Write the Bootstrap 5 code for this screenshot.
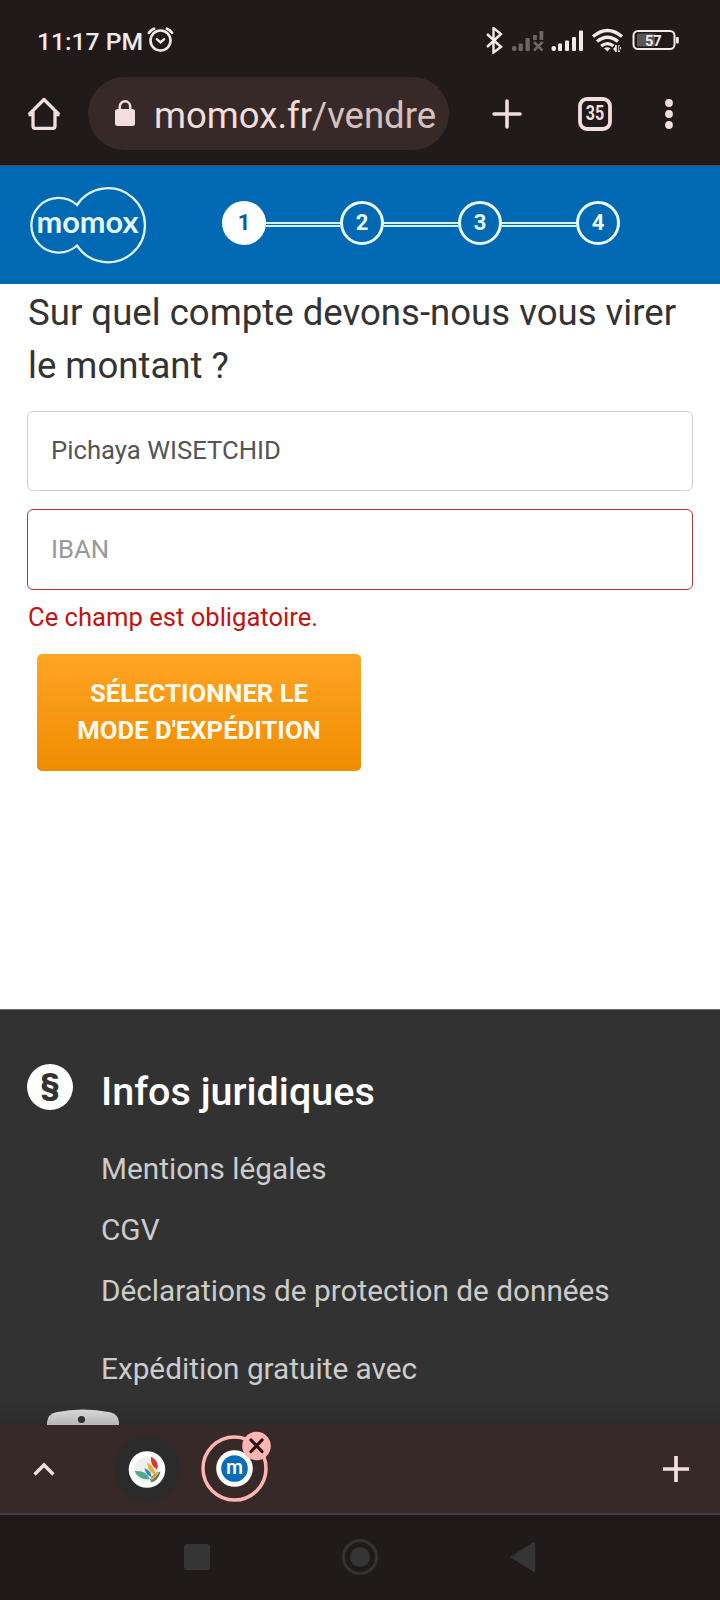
<!DOCTYPE html>
<html lang="fr">
<head>
<meta charset="utf-8">
<meta name="viewport" content="width=device-width, initial-scale=1">
<title>momox.fr – vendre</title>
<link rel="stylesheet" href="https://cdn.jsdelivr.net/npm/bootstrap@5.3.0/dist/css/bootstrap.min.css">
<style>
body{font-family:Roboto,sans-serif;width:720px;height:1600px;overflow:hidden;background:#fff;color:#333}
svg{display:block;flex:none}
.sys-bar{height:77px;padding:6px 41px 0 37px;background:#201a1a;color:#f1ebeb;font-size:24.7px;font-weight:500}
.browser-bar{height:89px;padding:0 0 15px;background:#201a1a;border-bottom:1px solid #4b4c50}
.address{width:361px;height:73px;margin-left:27px;padding:4px 0 0 26px;border-radius:37px;background:#382929;color:#f1dedd;font-size:36.5px;line-height:1;white-space:nowrap}
.address .url{padding-top:2px}
.address .path{color:#d8c2c0}
.site-head{height:118px;background:#0168b3}
.steps{margin-left:75px}
.step-dot{width:44px;height:44px;border:3.5px solid #e9fbff;border-radius:50%;color:#eafaff;font-size:22px;font-weight:700;line-height:1}
.step-dot.active{background:#fff;border-color:#fff;color:#0c5c9c}
.step-line{width:74px;height:5px;margin-top:3px;border:solid #d5f0fb;border-width:2px 0}
.account{height:725px;padding:2px 27px 0}
.account h1{font-size:36.6px;line-height:53px;font-weight:400;color:#333;margin:0 0 19px;padding-left:1px;white-space:nowrap}
.account .form-control{height:80px;border:1.5px solid #cfcfd2;border-radius:6px;padding:0 23px 2px;font-size:25.7px;color:#555;background:#fff}
.account .form-control::placeholder{color:#999;opacity:1}
.account .form-control.is-invalid{height:81px;margin-top:18px;border-color:#b73434;background-image:none;padding:0 23px 2px}
.account .invalid-feedback{font-size:25.6px;line-height:36px;color:#c4120f;margin:9px 0 19px;padding-left:1px}
.btn-order{width:324px;height:117px;margin-left:10px;padding:0 0 2px;border:0;border-radius:5px;background:linear-gradient(#ffa424,#ee8d00);color:#fffaf0;font-size:25.7px;line-height:36.6px;font-weight:700}
.site-foot{height:416px;padding:54px 27px 0;background:linear-gradient(#323232 0 390px,#2c2c2c);border-top:1px solid #6b6b6b;color:#ccc}
.para{width:46px;height:46px;background:#fff;color:#333;font-size:31px;font-weight:900;line-height:1;padding-bottom:5px}
.site-foot h2{font-size:39.5px;line-height:48px;font-weight:500;color:#fff;margin:4px 0 22px}
.site-foot a,.site-foot p{display:block;font-size:29.75px;line-height:61px;color:#ccc;text-decoration:none;margin:0;white-space:nowrap}
.site-foot p{margin-top:17px}
.tab-strip{height:90px;background:#382929;border-bottom:2px solid #4c3c3d;padding-left:32px;padding-right:27px}
.sys-nav{height:85px;background:#201a1a;padding:0 184px 2px}
</style>
</head>
<body class="d-flex flex-column">

<div class="sys-bar d-flex align-items-center flex-shrink-0">
  <span class="text-nowrap">11:17 PM</span>
  <svg class="ms-1" width="27" height="26" viewBox="0 0 27 26" fill="none" stroke="#f1ebeb" stroke-linecap="round" style="margin-top:-4px"><circle cx="13.500" cy="13.500" r="10" stroke-width="2.600"/><path d="M9.800 12.200l3.700 3.300 3.700-3.300" stroke-width="2.400"/><path d="M2 5.800Q4 3 7 1.800M20 1.800Q23 3 25 5.800" stroke-width="2.800"/></svg>
  <svg class="ms-auto" width="194" height="27" viewBox="485 27 194 27" fill="#f1ebeb" style="margin-top:-3px">
    <path d="M487 34l14 13-7.500 5.500V28l7.500 6-14 13" fill="none" stroke="#f1ebeb" stroke-width="2.400"/>
    <g fill="#6b6565"><rect x="512" y="46" width="4.500" height="5" rx="2"/><rect x="518.500" y="43.500" width="4.300" height="7.500" rx="1"/><rect x="525.500" y="38" width="4.300" height="13" rx="1"/><rect x="533" y="35" width="3.800" height="5"/><rect x="539.500" y="31" width="3.800" height="9"/><path d="M534 42l8.500 8.500m0-8.500l-8.500 8.500" stroke="#6b6565" stroke-width="2.600"/></g>
    <rect x="551.500" y="46" width="4.500" height="5" rx="2"/><rect x="558" y="43.500" width="4" height="7.500" rx="1"/><rect x="565" y="40.500" width="4" height="10.500" rx="1"/><rect x="572" y="37" width="4" height="14" rx="1"/><rect x="566" y="40.500" width="0" height="0"/><rect x="579" y="30.500" width="4" height="20.500" rx="1"/>
    <g fill="none" stroke="#f1ebeb" stroke-width="3.200"><path d="M593 36.500Q607.500 24.500 622 36.500"/><path d="M597 41.500Q607.500 33 618 41.500"/><path d="M601.200 46Q607.500 41.300 613.500 46"/></g>
    <path d="M604 48.300q3.300-2.300 6.600 0L607.300 51.500zM613 49l2.800-3v6zM621.500 48l-2.800-3v6zM615 45h1.800v7H615zM618 45h1.800v7H618z"/>
    <rect x="633.500" y="31" width="41" height="18" rx="4.500" fill="none" stroke="#f1ebeb" stroke-width="2"/>
    <rect x="637" y="33.500" width="18" height="13" rx="1.500" fill="#5b5656"/><rect x="676" y="37" width="2.800" height="6.500" rx="1"/>
    <text x="645" y="45.500" font-size="14.600" font-weight="700" font-family="Roboto, sans-serif">57</text>
  </svg>
</div>

<div class="browser-bar d-flex align-items-center flex-shrink-0">
  <svg style="margin-left:27px" width="34" height="34" viewBox="0 0 34 34" fill="none" stroke="#f1dedd" stroke-width="3.300" stroke-linejoin="round"><path d="M2 17.500L17 2.500l15 15M6 14.500V29q0 2.300 2.300 2.300h17.400q2.300 0 2.300-2.300V14.500M1.500 17.500H6m22 0h4.500"/></svg>
  <div class="address d-flex align-items-center">
    <svg width="22" height="28" viewBox="0 0 22 28" style="margin-top:-6px;margin-right:18px"><path d="M5.800 12V7.500a5.200 5.200 0 0 1 10.400 0V12" fill="none" stroke="#f1dedd" stroke-width="2.500"/><rect x="1" y="10" width="20" height="17" rx="2.500" fill="#f1dedd"/></svg>
    <div class="url">momox.fr<span class="path">/vendre</span></div>
  </div>
  <svg style="margin-left:43px" width="30" height="30" viewBox="0 0 30 30" stroke="#f1dedd" stroke-width="3.600" stroke-linecap="round"><path d="M15 2v26M2 15h26"/></svg>
  <svg style="margin-left:56px" width="34" height="34" viewBox="0 0 34 34"><rect x="2" y="2" width="30" height="30" rx="7" fill="none" stroke="#f1dedd" stroke-width="3.800"/><text x="17" y="23" text-anchor="middle" textLength="18.500" lengthAdjust="spacingAndGlyphs" font-size="19.500" font-weight="700" font-family="Roboto, sans-serif" fill="#f1dedd">35</text></svg>
  <svg style="margin-left:52px" width="10" height="32" viewBox="0 0 10 32" fill="#f1dedd"><circle cx="5" cy="5" r="3.900"/><circle cx="5" cy="16" r="3.900"/><circle cx="5" cy="27" r="3.900"/></svg>
</div>

<header class="site-head d-flex align-items-center flex-shrink-0">
  <svg width="118" height="78" viewBox="29 185.500 118 78" style="margin-left:29px"><path d="M77 204.500A27.300 27.300 0 1 0 77 245A37 37 0 1 0 77 204.500Z" fill="none" stroke="#def3fc" stroke-width="2.300"/><text x="36.500" y="232" textLength="102" lengthAdjust="spacingAndGlyphs" font-size="31" font-weight="700" font-family="Lato, sans-serif" fill="#e6f7ff">momox</text></svg>
  <div class="steps d-flex align-items-center pb-1">
    <div class="step-dot active d-flex align-items-center justify-content-center">1</div><div class="step-line"></div>
    <div class="step-dot d-flex align-items-center justify-content-center">2</div><div class="step-line"></div>
    <div class="step-dot d-flex align-items-center justify-content-center">3</div><div class="step-line"></div>
    <div class="step-dot d-flex align-items-center justify-content-center">4</div>
  </div>
</header>

<main class="account flex-shrink-0">
  <h1>Sur quel compte devons-nous vous virer<br>le montant ?</h1>
  <input class="form-control" type="text" value="Pichaya WISETCHID" aria-label="Titulaire">
  <input class="form-control is-invalid" type="text" placeholder="IBAN" aria-label="IBAN">
  <div class="invalid-feedback">Ce champ est obligatoire.</div>
  <button class="btn btn-order" type="button">SÉLECTIONNER LE<br>MODE D'EXPÉDITION</button>
</main>

<footer class="site-foot d-flex flex-column justify-content-between flex-shrink-0">
  <div class="d-flex align-items-start">
    <div class="para rounded-circle d-flex align-items-center justify-content-center flex-shrink-0">§</div>
    <div style="margin-left:28px">
      <h2>Infos juridiques</h2>
      <a href="#">Mentions légales</a>
      <a href="#">CGV</a>
      <a href="#">Déclarations de protection de données</a>
      <p>Expédition gratuite avec</p>
    </div>
  </div>
  <svg width="72" height="16" viewBox="0 0 72 16" style="margin-left:20px"><defs><linearGradient id="lid" x2="0" y2="1"><stop stop-color="#d8d8d8"/><stop offset="1" stop-color="#b5b5b5"/></linearGradient></defs><path d="M0 16v-3Q1 5 9 3.200 36-2 63 3.200 71 5 72 13v3z" fill="url(#lid)"/><circle cx="34.500" cy="10.500" r="3.600" fill="#303030"/></svg>
</footer>

<div class="tab-strip d-flex align-items-center flex-shrink-0">
  <svg width="24" height="16" viewBox="0 0 24 16" fill="none" stroke="#f1dedd" stroke-width="3.500"><path d="M2.500 13.500L12 4l9.500 9.500"/></svg>
  <svg width="66" height="66" viewBox="0 0 66 66" style="margin-left:58px"><circle cx="33" cy="33" r="33" fill="#2b2b2b"/><circle cx="33" cy="33.500" r="18.300" fill="#fff"/><circle cx="33" cy="33.500" r="12.500" fill="#f0eeee"/>
    <path d="M37 20.500q9 5 6 13-7-4-6-13z" fill="#d83a30"/><path d="M33.500 26.500q8 6 7.500 12-8-3-7.500-12z" fill="#efae35"/><path d="M30.500 32q7 3 7 9-6-2-7-9z" fill="#3a86c0"/><path d="M20.500 35q12-1 15 8-10 2-15-8z" fill="#4cab8a"/><path d="M46.500 35.500q-2 9-9 11l-1.500-3q3-6 10.500-8z" fill="#77765f"/><path d="M43.500 36.500q-1 3-6.500 7" stroke="#d7b257" stroke-width="2" fill="none"/></svg>
  <svg width="72" height="72" viewBox="200.500 1431 72 72" style="margin-left:20px;margin-top:-6px"><circle cx="235" cy="1469.500" r="31.500" fill="none" stroke="#ffb5b3" stroke-width="3.500"/><circle cx="235" cy="1469.500" r="18.300" fill="#fff"/><circle cx="235" cy="1469.500" r="13.300" fill="#0b6cb8"/><text x="235" y="1474.700" text-anchor="middle" textLength="17" lengthAdjust="spacingAndGlyphs" font-size="21" font-weight="700" font-family="Lato, sans-serif" fill="#fff">m</text><circle cx="257" cy="1447" r="14.300" fill="#ffb5b3"/><path d="M251.500 1441l11 11.500m0-11.500l-11 11.500" stroke="#2a1113" stroke-width="3.200" stroke-linecap="round"/></svg>
  <svg class="ms-auto" width="34" height="34" viewBox="0 0 34 34" stroke="#f1dedd" stroke-width="3.700"><path d="M17 4v26M4 17h26"/></svg>
</div>

<nav class="sys-nav d-flex align-items-center justify-content-between flex-shrink-0">
  <svg width="26" height="26" viewBox="0 0 26 26"><rect width="26" height="26" rx="3" fill="#353535"/></svg>
  <svg width="38" height="38" viewBox="0 0 38 38"><circle cx="19" cy="19" r="16.500" fill="none" stroke="#353232" stroke-width="3"/><circle cx="19" cy="19" r="10" fill="#353535"/></svg>
  <svg width="26" height="32" viewBox="0 0 26 32"><path d="M1.500 16L24.500 1.500v29z" fill="#353535" stroke="#353535" stroke-width="1.500" stroke-linejoin="round"/></svg>
</nav>

<script src="https://cdn.jsdelivr.net/npm/bootstrap@5.3.0/dist/js/bootstrap.bundle.min.js"></script>
</body>
</html>
